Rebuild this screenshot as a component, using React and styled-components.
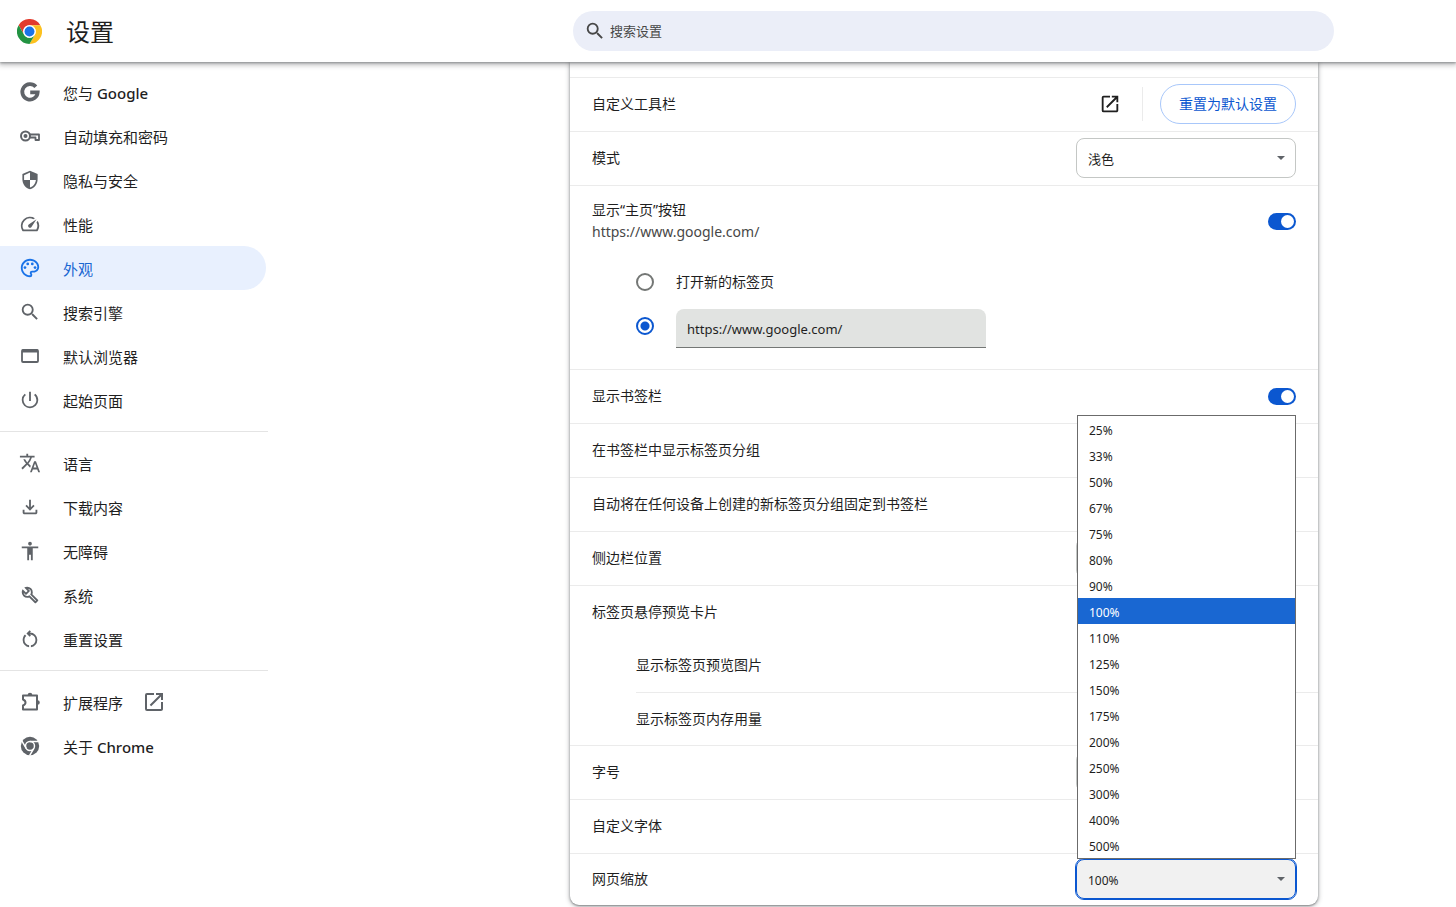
import React, { Component } from 'react';
import styled, { createGlobalStyle } from 'styled-components'
import {
  MdAccessibility, MdLaunch, MdOutlinePalette,
  MdPowerSettingsNew, MdSearch, MdSecurity, MdSpeed, MdTranslate
} from 'react-icons/md'

const color = {
  text: '#1f1f1f',
  textSub: '#474747',
  icon: '#5f6368',
  blue: '#0b57d0',
  blueMenu: '#1967d2',
  line: '#ebebeb',
}

const GlobalStyle = createGlobalStyle`
  * { box-sizing: border-box; }
  body {
    min-height: 100vh;
    margin: 0;
    background: #fff;
    color: ${color.text};
    font-family: "Noto Sans", "Noto Sans CJK SC", sans-serif;
    font-size: 14px;
    line-height: 22px;
  }
  input, select, button { font-family: inherit; color: inherit; }
  svg { display: block; flex: none; }
`;

const Header = styled.header`
  position: sticky;
  top: 0;
  z-index: 2;
  display: grid;
  grid-template-columns: minmax(268px, 573fr) minmax(0, 761px) 122fr;
  align-items: center;
  height: 62px;
  background: #fff;
  box-shadow: 0 1px 2px rgba(60, 64, 67, .4), 0 2px 5px 1px rgba(60, 64, 67, .35);
`

const Brand = styled.div`
  display: flex;
  align-items: center;
  gap: 24px;
  padding-left: 17px;
`

const Title = styled.h1`
  margin: 0;
  padding-top: 2px;
  font-size: 24px;
  line-height: 36px;
  font-weight: 400;
`

const SearchBox = styled.label`
  display: flex;
  align-items: center;
  gap: 4px;
  height: 40px;
  padding: 0 11px;
  border-radius: 20px;
  background: #ebeef8;
  color: ${color.textSub};
`

const SearchInput = styled.input`
  flex: 1;
  min-width: 0;
  padding: 0;
  border: 0;
  outline: 0;
  background: transparent;
  font-size: 13px;
  &::placeholder { color: ${color.textSub}; opacity: 1; }
`

const Content = styled.div`
  display: grid;
  grid-template-columns: minmax(268px, 570fr) minmax(0, 748px) 138fr;
  align-items: start;
  padding-bottom: 2px;
`

const Menu = styled.nav`
  width: 268px;
  padding-top: 8px;
`

const MenuItem = styled.a`
  display: flex;
  align-items: center;
  gap: 22px;
  height: 44px;
  margin-right: 2px;
  padding-left: 19px;
  border-radius: 0 22px 22px 0;
  font-size: 15px;
  text-decoration: none;
  color: ${props => props.$active ? color.blueMenu : color.text};
  background: ${props => props.$active ? '#e8f0fe' : 'transparent'};
  svg { color: ${props => props.$active ? '#1a73e8' : color.icon}; }
  b { font-weight: 500; }
`

const MenuLabel = styled.span`
  padding-top: 1px;
`

const MenuLine = styled.hr`
  height: 1px;
  margin: 9px 0;
  border: 0;
  background: #e4e4e4;
`

const Card = styled.main`
  padding-top: 15px;
  border-radius: 0 0 9px 9px;
  background: #fff;
  box-shadow: 0 1px 2px rgba(60, 64, 67, .5), 0 1px 4px 1px rgba(60, 64, 67, .3);
`

const Section = styled.section`
  border-top: 1px solid ${color.line};
`

const Row = styled.div`
  display: flex;
  align-items: center;
  justify-content: space-between;
  height: ${props => props.$size || 53}px;
  padding: 0 22px 1px;
`

const SubRows = styled.div`
  padding-left: 66px;
`

const SubRow = styled.div`
  display: flex;
  align-items: center;
  justify-content: space-between;
  height: 53px;
  padding: 0 22px 1px 0;
  & + & { border-top: 1px solid ${color.line}; }
`

const SubText = styled.div`
  color: ${color.textSub};
`

const Actions = styled.div`
  display: flex;
  align-items: center;
  gap: 17px;
`

const IconButton = styled.button`
  display: flex;
  padding: 4px;
  border: 0;
  background: transparent;
  cursor: pointer;
`

const ActionLine = styled.div`
  width: 1px;
  height: 34px;
  background: ${color.line};
`

const ResetButton = styled.button`
  height: 40px;
  padding: 0 18px 2px;
  border: 1px solid #a8c7fa;
  border-radius: 20px;
  background: #fff;
  color: ${color.blue};
  font-size: 14px;
  cursor: pointer;
`

const Switch = styled.input.attrs({ type: 'checkbox', role: 'switch' })`
  appearance: none;
  display: flex;
  align-items: center;
  justify-content: flex-end;
  width: 28px;
  height: 17px;
  margin: 0;
  padding: 0 2px;
  border-radius: 9px;
  background: ${color.blue};
  &::before {
    content: '';
    width: 13px;
    height: 13px;
    border-radius: 50%;
    background: #fff;
  }
  &:not(:checked) {
    justify-content: flex-start;
    background: #747775;
  }
`

const RadioGroup = styled.div`
  padding: 3px 22px 21px 66px;
`

const RadioRow = styled.div`
  display: flex;
  align-items: center;
  gap: 22px;
  height: 44px;
`

const Radio = styled.input.attrs({ type: 'radio' })`
  appearance: none;
  flex: none;
  width: 18px;
  height: 18px;
  margin: 0;
  border: 2px solid #747775;
  border-radius: 50%;
  &:checked {
    border-color: ${color.blue};
    background: radial-gradient(circle, ${color.blue} 4px, transparent 5px);
  }
`

const UrlInput = styled.input`
  align-self: flex-end;
  width: 310px;
  height: 39px;
  padding: 2px 11px 0;
  border: 0;
  border-bottom: 1px solid #747775;
  border-radius: 8px 8px 0 0;
  outline: 0;
  background: #e1e3e1;
  font-size: 13px;
`

const SelectWrap = styled.div`
  position: relative;
  width: 220px;
`

const Select = styled.select`
  appearance: none;
  display: block;
  width: 100%;
  height: 40px;
  padding: 2px 11px 0;
  border: 1px solid ${props => props.$open ? color.blue : '#c4c7c5'};
  border-radius: 8px;
  outline: ${props => props.$open ? `1px solid ${color.blue}` : '0'};
  background: ${props => props.$open ? '#f1f1f1' : '#fff'};
  font-size: ${props => props.$open ? 12 : 13}px;
`

const SelectArrow = styled.svg`
  position: absolute;
  top: 18px;
  right: 11px;
  pointer-events: none;
`

/* 展开的下拉列表 */
const Popup = styled.ul`
  position: absolute;
  z-index: 1;
  bottom: 100%;
  left: 1px;
  right: 0;
  margin: 0;
  padding: 0;
  border: 1px solid #6b6b6b;
  background: #fff;
  list-style: none;
`

const PopupItem = styled.li`
  height: 26px;
  padding: 4px 11px 0;
  font-size: 12px;
  color: ${props => props.$active ? '#fff' : color.text};
  background: ${props => props.$active ? '#1967d2' : 'transparent'};
`

const ChromeLogo = () => (
  <svg width="25" height="25" viewBox="0 0 48 48">
    <path fill="#e33b2e" d="M3.2 12A24 24 0 0 1 44.8 12H24A12 12 0 0 0 13.6 30Z" />
    <path fill="#fcc11f" d="M44.8 12A24 24 0 0 1 24 48L34.4 30A12 12 0 0 0 24 12Z" />
    <path fill="#229342" d="M24 48A24 24 0 0 1 3.2 12L13.6 30A12 12 0 0 0 34.4 30Z" />
    <circle cx="24" cy="24" r="12" fill="#fff" />
    <circle cx="24" cy="24" r="9.5" fill="#1a73e8" />
  </svg>
)

const ChromeMono = () => (
  <svg width="22" height="22" viewBox="0 0 24 24" fill="none">
    <circle cx="12" cy="12" r="10" fill="currentColor" />
    <circle cx="12" cy="12" r="4.9" stroke="#fff" strokeWidth="1.6" />
    <path stroke="#fff" strokeWidth="1.6" d="M12 7.1H21.5M7.8 14.5 3.1 6.4M16.2 14.5 11.5 22.6" />
  </svg>
)

const GoogleMono = () => (
  <svg width="22" height="22" viewBox="-1 -1 20 20">
    <path fill="none" stroke="currentColor" strokeWidth="3.4"
      d="M14.3 4.3A7 7 0 1 0 16 9.4H9.2" />
  </svg>
)

const KeyIcon = () => (
  <svg width="22" height="22" viewBox="0 0 22 22">
    <circle cx="6.5" cy="11" r="4.5" fill="none" stroke="currentColor" strokeWidth="2" />
    <circle cx="6.5" cy="11" r="2" fill="currentColor" />
    <path fill="none" stroke="currentColor" strokeWidth="1.8" strokeLinejoin="round"
      d="M11 9.5H20V15H16.5V12.5H11" />
  </svg>
)

const BrowserIcon = () => (
  <svg width="22" height="22" viewBox="0 0 22 22">
    <rect x="3" y="5" width="16" height="12" rx="1" fill="none" stroke="currentColor" strokeWidth="1.8" />
    <path fill="currentColor" d="M3 4.500H19V7.500H3Z" />
  </svg>
)

const DownloadIcon = () => (
  <svg width="22" height="22" viewBox="0 -960 960 960" fill="currentColor">
    <path d="M480-320 280-520l56-58 104 104v-326h80v326l104-104 56 58-200 200ZM240-160q-33 0-56.5-23.5T160-240v-120h80v120h480v-120h80v120q0 33-23.5 56.5T720-160H240Z" />
  </svg>
)

const WrenchIcon = () => (
  <svg width="22" height="22" viewBox="0 -960 960 960" fill="currentColor">
    <path d="M686-132 444-376q-20 8-40.5 12t-43.5 4q-100 0-170-70t-70-170q0-36 10-68.5t28-61.5l146 146 72-72-146-146q29-18 61.5-28t68.5-10q100 0 170 70t70 170q0 23-4 43.5T584-516l244 242q12 12 12 29t-12 29l-84 84q-12 12-29 12t-29-12Zm29-85 27-27-256-256q18-20 26-46.5t8-53.5q0-60-38.5-104.5T386-758l74 74q12 12 12 28t-12 28L332-500q-12 12-28 12t-28-12l-74-74q9 57 53.5 95.5T360-440q26 0 52-8t47-25l256 256Z" />
  </svg>
)

const ResetIcon = () => (
  <svg width="22" height="22" viewBox="0 -960 960 960" fill="currentColor">
    <path d="M440-122q-121-15-200.5-105.5T160-440q0-66 26-126.5T260-672l57 57q-38 34-57.5 79T240-440q0 88 56 155.5T440-202v80Zm80 0v-82q87-16 143.5-83T720-440q0-100-70-170t-170-70h-3l44 44-56 56-140-140 140-140 56 56-44 44h3q134 0 227 93t93 227q0 121-79.5 211.5T520-122Z" />
  </svg>
)

const PuzzleIcon = () => (
  <svg width="22" height="22" viewBox="0 0 22 22">
    <path fill="none" stroke="currentColor" strokeWidth="2" strokeLinejoin="round"
      d="M4 4.5H18V18.5H4V14.5Q6.5 13.5 6.5 11.5T4 8.5Z" />
    <path fill="currentColor" d="M8.7 4A2.3 2.3 0 0 1 13.3 4ZM18.5 9.2A2.3 2.3 0 0 1 18.5 13.8Z" />
  </svg>
)

const menuGroups = [
  [
    { icon: <GoogleMono />, label: <span>您与 <b>Google</b></span> },
    { icon: <KeyIcon />, label: '自动填充和密码' },
    { icon: <MdSecurity size={22} viewBox="-1 -1 26 26" />, label: '隐私与安全' },
    { icon: <MdSpeed size={22} />, label: '性能' },
    { icon: <MdOutlinePalette size={22} />, label: '外观', active: true },
    { icon: <MdSearch size={22} />, label: '搜索引擎' },
    { icon: <BrowserIcon />, label: '默认浏览器' },
    { icon: <MdPowerSettingsNew size={22} />, label: '起始页面' },
  ],
  [
    { icon: <MdTranslate size={22} />, label: '语言' },
    { icon: <DownloadIcon />, label: '下载内容' },
    { icon: <MdAccessibility size={22} />, label: '无障碍' },
    { icon: <WrenchIcon />, label: '系统' },
    { icon: <ResetIcon />, label: '重置设置' },
  ],
  [
    { icon: <PuzzleIcon />, label: '扩展程序', tail: <MdLaunch size={18} viewBox="3 3 18 18" /> },
    { icon: <ChromeMono />, label: <span>关于 <b>Chrome</b></span> },
  ],
]

const zooms = [25, 33, 50, 67, 75, 80, 90, 100, 110, 125, 150, 175, 200, 250, 300, 400, 500]

const Dropdown = ({ id, options, value, open }) => (
  <SelectWrap>
    <Select id={id} defaultValue={value} $open={open}>
      {options.map(option => <option key={option}>{option}</option>)}
    </Select>
    <SelectArrow width="8" height="4" viewBox="0 0 8 4">
      <path fill={color.icon} d="M0 0H8L4 4Z" />
    </SelectArrow>
    {open && (
      <Popup role="listbox" aria-label="网页缩放">
        {options.map(option => (
          <PopupItem key={option} role="option" aria-selected={option === value} $active={option === value}>
            {option}
          </PopupItem>
        ))}
      </Popup>
    )}
  </SelectWrap>
)

class App extends Component {
  render() {
    return (
      <React.Fragment>
        <GlobalStyle />
        <Header>
          <Brand>
            <ChromeLogo />
            <Title>设置</Title>
          </Brand>
          <SearchBox>
            <MdSearch size={22} />
            <SearchInput type="search" placeholder="搜索设置" aria-label="搜索设置" />
          </SearchBox>
        </Header>

        <Content>
          <Menu>
            {menuGroups.map((group, i) => (
              <React.Fragment key={i}>
                {i > 0 && <MenuLine />}
                {group.map((item, j) => (
                  <MenuItem key={j} href="#" $active={item.active}>
                    {item.icon}
                    <MenuLabel>{item.label}</MenuLabel>
                    {item.tail}
                  </MenuItem>
                ))}
              </React.Fragment>
            ))}
          </Menu>

          <Card>
            <Section>
              <Row>
                自定义工具栏
                <Actions>
                  <IconButton aria-label="自定义工具栏"><MdLaunch size={22} /></IconButton>
                  <ActionLine />
                  <ResetButton>重置为默认设置</ResetButton>
                </Actions>
              </Row>
            </Section>

            <Section>
              <Row>
                <label htmlFor="mode">模式</label>
                <Dropdown id="mode" options={['浅色', '深色', '设备']} value="浅色" />
              </Row>
            </Section>

            <Section>
              <Row $size={71}>
                <label htmlFor="home">
                  显示“主页”按钮
                  <SubText>https://www.google.com/</SubText>
                </label>
                <Switch id="home" defaultChecked />
              </Row>
              <RadioGroup>
                <RadioRow>
                  <Radio id="newtab" name="homepage" />
                  <label htmlFor="newtab">打开新的标签页</label>
                </RadioRow>
                <RadioRow>
                  <Radio name="homepage" aria-label="自定义网址" defaultChecked />
                  <UrlInput type="text" aria-label="自定义网址" defaultValue="https://www.google.com/" />
                </RadioRow>
              </RadioGroup>
            </Section>

            <Section>
              <Row>
                <label htmlFor="bookmarks">显示书签栏</label>
                <Switch id="bookmarks" defaultChecked />
              </Row>
            </Section>
            <Section>
              <Row>
                <label htmlFor="groups">在书签栏中显示标签页分组</label>
                <Switch id="groups" defaultChecked />
              </Row>
            </Section>
            <Section>
              <Row>
                <label htmlFor="pin">自动将在任何设备上创建的新标签页分组固定到书签栏</label>
                <Switch id="pin" defaultChecked />
              </Row>
            </Section>
            <Section>
              <Row>
                <label htmlFor="side">侧边栏位置</label>
                <Dropdown id="side" options={['靠右显示', '靠左显示']} value="靠右显示" />
              </Row>
            </Section>

            <Section>
              <Row>标签页悬停预览卡片</Row>
              <SubRows>
                <SubRow>
                  <label htmlFor="preview">显示标签页预览图片</label>
                  <Switch id="preview" defaultChecked />
                </SubRow>
                <SubRow>
                  <label htmlFor="memory">显示标签页内存用量</label>
                  <Switch id="memory" defaultChecked />
                </SubRow>
              </SubRows>
            </Section>

            <Section>
              <Row>
                <label htmlFor="size">字号</label>
                <Dropdown id="size" options={['小', '中', '大']} value="中" />
              </Row>
            </Section>
            <Section>
              <Row>自定义字体</Row>
            </Section>
            <Section>
              <Row $size={51}>
                <label htmlFor="zoom">网页缩放</label>
                <Dropdown id="zoom" options={zooms.map(z => `${z}%`)} value="100%" open />
              </Row>
            </Section>
          </Card>
        </Content>
      </React.Fragment>
    );
  }
}

export default App;
